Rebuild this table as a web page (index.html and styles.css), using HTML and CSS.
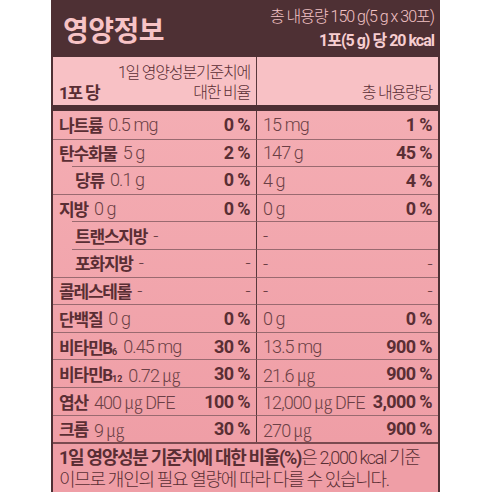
FILE: index.html
```html
<!DOCTYPE html>
<html lang="ko">
<head>
    <meta charset="UTF-8">
    <meta name="viewport" content="width=device-width, initial-scale=1.0">
    <title>영양정보</title>
    <link rel="stylesheet" href="styles.css">
</head>
<body>
<div class="label">
    <div class="top">
        <h1>영양정보</h1>
        <div class="info">
            <div>총 내용량 150 g(5 g x 30포)</div>
            <div class="kcal">1포(5 g) 당 20 kcal</div>
        </div>
    </div>

    <div class="head-row">
        <div class="cell l">
            <b>1포 당</b>
            <span class="ratio">1일 영양성분기준치에<br>대한 비율</span>
        </div>
        <div class="cell r">
            <span class="total">총 내용량당</span>
        </div>
    </div>

    <div class="rows">
        <div class="row first">
            <div class="cell l"><b>나트륨</b><span class="v">0.5 mg</span><b class="p">0 %</b></div>
            <div class="cell r"><span class="v">15 mg</span><b class="p">1 %</b></div>
        </div>
        <div class="row">
            <div class="cell l"><b>탄수화물</b><span class="v">5 g</span><b class="p">2 %</b></div>
            <div class="cell r"><span class="v">147 g</span><b class="p">45 %</b></div>
        </div>
        <div class="row sub">
            <div class="cell l"><b>당류</b><span class="v">0.1 g</span><b class="p">0 %</b></div>
            <div class="cell r"><span class="v">4 g</span><b class="p">4 %</b></div>
        </div>
        <div class="row">
            <div class="cell l"><b>지방</b><span class="v">0 g</span><b class="p">0 %</b></div>
            <div class="cell r"><span class="v">0 g</span><b class="p">0 %</b></div>
        </div>
        <div class="row sub">
            <div class="cell l"><b>트랜스지방</b><span class="v">-</span></div>
            <div class="cell r"><span class="v">-</span></div>
        </div>
        <div class="row sub">
            <div class="cell l"><b>포화지방</b><span class="v">-</span><span class="p v">-</span></div>
            <div class="cell r"><span class="v">-</span><span class="p v">-</span></div>
        </div>
        <div class="row">
            <div class="cell l"><b>콜레스테롤</b><span class="v">-</span><span class="p v">-</span></div>
            <div class="cell r"><span class="v">-</span><span class="p v">-</span></div>
        </div>
        <div class="row">
            <div class="cell l"><b>단백질</b><span class="v">0 g</span><b class="p">0 %</b></div>
            <div class="cell r"><span class="v">0 g</span><b class="p">0 %</b></div>
        </div>
        <div class="row">
            <div class="cell l"><b>비타민B<sub>6</sub></b><span class="v">0.45 mg</span><b class="p">30 %</b></div>
            <div class="cell r"><span class="v">13.5 mg</span><b class="p">900 %</b></div>
        </div>
        <div class="row">
            <div class="cell l"><b>비타민B<sub>12</sub></b><span class="v">0.72 ㎍</span><b class="p">30 %</b></div>
            <div class="cell r"><span class="v">21.6 ㎍</span><b class="p">900 %</b></div>
        </div>
        <div class="row">
            <div class="cell l"><b>엽산</b><span class="v">400 ㎍ DFE</span><b class="p">100 %</b></div>
            <div class="cell r"><span class="v">12,000 ㎍ DFE</span><b class="p">3,000 %</b></div>
        </div>
        <div class="row">
            <div class="cell l"><b>크롬</b><span class="v">9 ㎍</span><b class="p">30 %</b></div>
            <div class="cell r"><span class="v">270 ㎍</span><b class="p">900 %</b></div>
        </div>
    </div>

    <div class="note">
        <b>1일 영양성분 기준치에 대한 비율(%)</b>은 2,000 kcal 기준<br>
        이므로 개인의 필요 열량에 따라 다를 수 있습니다.
    </div>
</div>
</body>
</html>
```

FILE: styles.css
```css
body {
    margin: 0;
    padding: 0 0 0 51px;
    background: #ffffff;
    font-family: Roboto, "Noto Sans CJK KR", sans-serif;
    color: #5a2e34;
}

.label {
    width: 389px;
    box-sizing: border-box;
    border-left: 2px solid #4e3034;
    border-right: 2px solid #4e3034;
    background: #f4adb3;
}

.top {
    height: 57px;
    background: #4e3034;
    display: flex;
    align-items: center;
    justify-content: space-between;
    padding: 0 4px 0 10px;
}

.top h1 {
    margin: 0;
    font-size: 28px;
    font-weight: 700;
    letter-spacing: -0.5px;
    color: #f7c3c6;
}

.info {
    text-align: right;
    color: #f2c2c5;
    font-size: 16px;
    letter-spacing: -1px;
    line-height: 24px;
    font-weight: 300;
}

.info .kcal {
    font-weight: 700;
    color: #f6cdd0;
}

.head-row {
    display: grid;
    grid-template-columns: 203px 1fr;
    height: 48px;
    background: #f8c1c5;
    border-bottom: 6px solid #4e3034;
}

.head-row .cell {
    display: flex;
    align-items: flex-end;
    justify-content: space-between;
    padding: 0 6px 2px 6px;
    font-size: 16px;
    letter-spacing: -1.2px;
    line-height: 20px;
}

.head-row .r {
    justify-content: flex-end;
    border-left: 1.5px solid #5a383c;
}

.ratio {
    text-align: right;
    font-weight: 300;
}

.total {
    font-weight: 300;
}

.rows {
    background: linear-gradient(#f4adb3, #ef9ea6);
}

.row {
    display: grid;
    grid-template-columns: 203px 1fr;
    height: 27.6px;
}

.cell {
    display: flex;
    align-items: center;
    padding: 0 6px 0 6px;
    white-space: nowrap;
}

.row .cell {
    box-sizing: border-box;
    border-top: 1px solid #9a6a70;
}

.row.first .cell {
    border-top: none;
}

.row .r {
    border-left: 1.5px solid #5a383c;
}

.row.sub .l {
    border-top: none;
    padding-left: 22px;
    background: linear-gradient(#9a6a70, #9a6a70) no-repeat 19px 0 / calc(100% - 19px) 1px;
}

.cell b {
    font-size: 17px;
    font-weight: 700;
    letter-spacing: -1.2px;
}

.cell sub {
    font-size: 9px;
    vertical-align: -1px;
    letter-spacing: 0;
}

.v {
    font-size: 18px;
    font-weight: 300;
    letter-spacing: -0.9px;
    color: #6b3f45;
    margin-left: 6px;
}

.r .v {
    margin-left: 0;
}

.cell .p {
    margin-left: auto;
    padding-left: 8px;
    font-size: 18px;
    letter-spacing: -0.6px;
}

.note {
    border-top: 2px solid #7a4a50;
    background: #ef9ea6;
    padding: 3px 6px 8px 6px;
    font-size: 18px;
    line-height: 22px;
    letter-spacing: -1.3px;
    font-weight: 300;
    white-space: nowrap;
}

.note b {
    font-weight: 700;
}
```
